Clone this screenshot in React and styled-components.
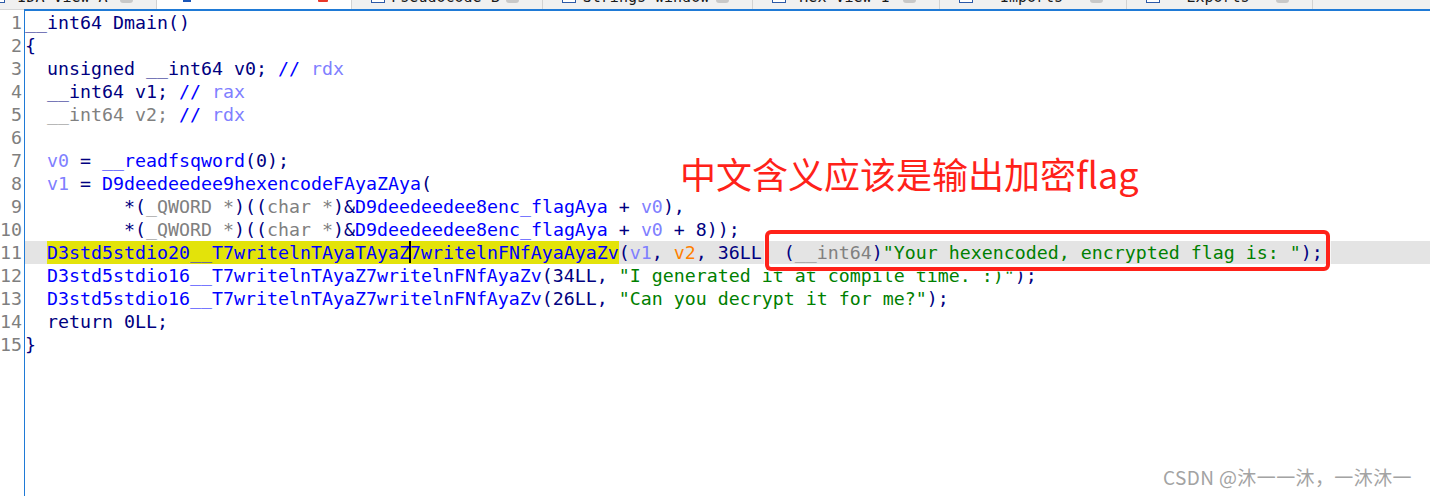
import React from "react";
import styled, { createGlobalStyle } from "styled-components";

const GlobalStyle = createGlobalStyle`
  html, body { margin: 0; padding: 0; background: #ffffff; overflow: hidden; }
  #root { width: 1430px; height: 496px; }
`;

const C = {
  k: "#000080",
  f: "#0000ff",
  v: "#8080ff",
  g: "#808080",
  s: "#008000",
  o: "#ff8000",
};

const Page = styled.div`
  position: relative;
  width: 1430px;
  height: 496px;
  overflow: hidden;
  display: flex;
  flex-direction: column;
  background: #ffffff;
`;

const TabBar = styled.div`
  height: 9px;
  flex: none;
  background: #f0f0f0;
  overflow: hidden;
  display: flex;
  align-items: flex-end;
`;

const TabStrip = styled.div`
  display: flex;
  align-items: flex-end;
  margin-left: -28px;
`;

const Tab = styled.div`
  flex: none;
  width: ${(p) => p.$w}px;
  height: 30px;
  box-sizing: border-box;
  display: flex;
  align-items: flex-end;
  padding: 0 23px ${(p) => (p.$active ? 7 : 6)}px ${(p) => (p.$active ? 26 : 19)}px;
  border-right: 1px solid #d2d2d2;
  background: ${(p) => (p.$active ? "#ffffff" : "#f0f0f0")};
`;

const TabIcon = styled.span`
  flex: none;
  height: 12px;
  box-sizing: border-box;
  border: 1.5px solid ${(p) => (p.$active ? "#1a56b8" : "#2d5aa8")};
  background: ${(p) => (p.$active ? "#1a56b8" : "#ffffff")};
  width: ${(p) => (p.$active ? 8 : 14)}px;
`;

const TabLabel = styled.span`
  flex: 1;
  text-align: center;
  font-family: "DejaVu Sans Mono", monospace;
  font-size: 15px;
  line-height: 15px;
  color: #1a1a1a;
  margin-bottom: -2px;
  white-space: nowrap;
`;

const CloseBtn = styled.span`
  flex: none;
  width: ${(p) => (p.$active ? 10 : 13)}px;
  height: 11px;
  border-radius: ${(p) => (p.$active ? 1 : 3)}px;
  background: ${(p) => (p.$active ? "#e8382a" : "#c8c8c8")};
`;

const Editor = styled.div`
  flex: 1;
  display: flex;
  min-height: 0;
`;

const Gutter = styled.div`
  flex: none;
  width: 24px;
  box-sizing: border-box;
  padding: 1px 2px 0 0;
  border-top: 1px solid #d6d6d6;
  font-family: "DejaVu Sans Mono", monospace;
  font-size: 18.27px;
  line-height: 23px;
  color: #7f7f7f;
  text-align: right;
`;

const LineNo = styled.div`
  height: 23px;
`;

const CodePane = styled.div`
  flex: 1;
  border-left: 1px solid #1f7ad6;
  border-top: 2px solid #1f7ad6;
  font-family: "DejaVu Sans Mono", monospace;
  font-size: 18.27px;
  line-height: 23px;
`;

const CodeLine = styled.div`
  height: 23px;
  white-space: pre;
  color: ${C.k};
  background: ${(p) => (p.$current ? "#e4e4e4" : "transparent")};
`;

const Tok = styled.span`
  color: ${(p) => C[p.$t]};
`;

const Mark = styled.span`
  display: inline-block;
  height: 23px;
  vertical-align: top;
  background: #e3e30a;
`;

const Caret = styled.span`
  display: inline-block;
  width: 0;
  height: 22px;
  vertical-align: top;
  border-left: 2px solid #000000;
  margin-left: -1px;
  margin-right: -1px;
`;

const Annotation = styled.div`
  position: absolute;
  left: 680px;
  top: 155px;
  font-family: "Noto Sans CJK SC", "Noto Sans", sans-serif;
  font-size: 36px;
  line-height: 36px;
  color: #ff2219;
  white-space: nowrap;
`;

const CalloutBox = styled.div`
  position: absolute;
  left: 765px;
  top: 230px;
  width: 565px;
  height: 41px;
  box-sizing: border-box;
  border: 4px solid #ff2219;
  border-radius: 6px;
  box-shadow: 0 0 0 1px rgba(255, 255, 255, 0.7);
`;

const Watermark = styled.div`
  position: absolute;
  left: 1163px;
  top: 466px;
  font-family: "Noto Sans CJK SC", "Noto Sans", sans-serif;
  font-size: 19px;
  letter-spacing: 0.4px;
  line-height: 22px;
  color: #a3a3a3;
  white-space: nowrap;
  text-shadow: 0 0 1px rgba(255, 255, 255, 0.8);
`;

const tabs = [
  { label: "IDA View-A", w: 185 },
  { label: "Pseudocode-A", w: 195, active: true },
  { label: "Pseudocode-B", w: 191 },
  { label: "Strings window", w: 210 },
  { label: "Hex View-1", w: 187 },
  { label: "Imports", w: 187 },
  { label: "Exports", w: 186 },
];

const lines = [
  [["k", "__int64 Dmain()"]],
  [["k", "{"]],
  [["k", "  unsigned __int64 v0; "], ["f", "//"], ["v", " rdx"]],
  [["k", "  __int64 v1; "], ["f", "//"], ["v", " rax"]],
  [["k", "  "], ["g", "__int64 v2;"], ["k", " "], ["f", "//"], ["v", " rdx"]],
  [],
  [["k", "  "], ["v", "v0"], ["k", " = "], ["f", "__readfsqword"], ["k", "(0);"]],
  [["k", "  "], ["v", "v1"], ["k", " = "], ["f", "D9deedeedee9hexencodeFAyaZAya"], ["k", "("]],
  [
    ["k", "         *("], ["g", "_QWORD *"], ["k", ")(("], ["g", "char *"], ["k", ")&"],
    ["f", "D9deedeedee8enc_flagAya"], ["k", " + "], ["v", "v0"], ["k", "),"],
  ],
  [
    ["k", "         *("], ["g", "_QWORD *"], ["k", ")(("], ["g", "char *"], ["k", ")&"],
    ["f", "D9deedeedee8enc_flagAya"], ["k", " + "], ["v", "v0"], ["k", " + 8));"],
  ],
  "current",
  [
    ["k", "  "], ["f", "D3std5stdio16__T7writelnTAyaZ7writelnFNfAyaZv"], ["k", "(34LL, "],
    ["s", "\"I generated it at compile time. :)\""], ["k", ");"],
  ],
  [
    ["k", "  "], ["f", "D3std5stdio16__T7writelnTAyaZ7writelnFNfAyaZv"], ["k", "(26LL, "],
    ["s", "\"Can you decrypt it for me?\""], ["k", ");"],
  ],
  [["k", "  return 0LL;"]],
  [["k", "}"]],
];

function CurrentLine() {
  return (
    <CodeLine $current>
      <Tok $t="k">{"  "}</Tok>
      <Mark>
        <Tok $t="f">D3std5stdio20__T7writelnTAyaTAyaZ</Tok>
        <Caret />
        <Tok $t="f">7writelnFNfAyaAyaZv</Tok>
      </Mark>
      <Tok $t="k">(</Tok>
      <Tok $t="v">v1</Tok>
      <Tok $t="k">, </Tok>
      <Tok $t="o">v2</Tok>
      <Tok $t="k">, 36LL, (</Tok>
      <Tok $t="g">__int64</Tok>
      <Tok $t="k">)</Tok>
      <Tok $t="s">"Your hexencoded, encrypted flag is: "</Tok>
      <Tok $t="k">);</Tok>
    </CodeLine>
  );
}

export default function App() {
  return (
    <Page>
      <GlobalStyle />
      <TabBar>
        <TabStrip>
          {tabs.map((t) => (
            <Tab key={t.label} $w={t.w} $active={t.active}>
              <TabIcon $active={t.active} />
              <TabLabel>{t.active ? "" : t.label}</TabLabel>
              <CloseBtn $active={t.active} />
            </Tab>
          ))}
        </TabStrip>
      </TabBar>
      <Editor>
        <Gutter>
          {lines.map((_, i) => (
            <LineNo key={i}>{i + 1}</LineNo>
          ))}
        </Gutter>
        <CodePane>
          {lines.map((l, i) =>
            l === "current" ? (
              <CurrentLine key={i} />
            ) : (
              <CodeLine key={i}>
                {l.map(([t, s], j) => (
                  <Tok key={j} $t={t}>
                    {s}
                  </Tok>
                ))}
              </CodeLine>
            )
          )}
        </CodePane>
      </Editor>
      <Annotation>中文含义应该是输出加密flag</Annotation>
      <CalloutBox />
      <Watermark>CSDN @沐一一沐，一沐沐一</Watermark>
    </Page>
  );
}
